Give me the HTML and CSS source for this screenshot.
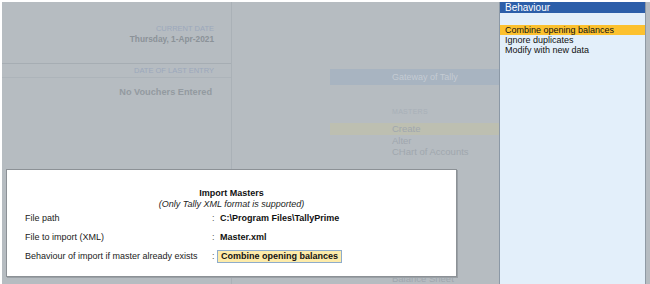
FILE: index.html
```html
<!DOCTYPE html>
<html lang="en">
<head>
  <meta charset="UTF-8" />
  <title>Import Masters</title>
  <link rel="stylesheet" href="styles.css">
</head>
<body>
  <div class="screen">
    <div class="desk">
      <div class="info">
        <div class="info-top">
          <div class="caption">CURRENT DATE</div>
          <div class="date">Thursday, 1-Apr-2021</div>
        </div>
        <div class="info-band">
          <div class="caption">DATE OF LAST ENTRY</div>
        </div>
        <div class="no-entry">No Vouchers Entered</div>
      </div>

      <div class="gateway">
        <div class="gateway-head">Gateway of Tally</div>
        <div class="gateway-body">
          <div class="group">MASTERS</div>
          <div class="item active">Create</div>
          <div class="item">Alter</div>
          <div class="item">CHart of Accounts</div>
          <div class="group spaced">TRANSACTIONS</div>
          <div class="item">Vouchers</div>
          <div class="item">Day Book</div>
          <div class="group spaced">UTILITIES</div>
          <div class="item">Banking</div>
          <div class="group spaced">REPORTS</div>
          <div class="item">Balance Sheet</div>
        </div>
      </div>

      <div class="dialog">
        <div class="dialog-title">Import Masters</div>
        <div class="dialog-note">(Only Tally XML format is supported)</div>
        <div class="fields">
          <div class="label">File path</div>
          <div class="colon">:</div>
          <div class="value">C:\Program Files\TallyPrime</div>

          <div class="label">File to import (XML)</div>
          <div class="colon">:</div>
          <div class="value">Master.xml</div>

          <div class="label">Behaviour of import if master already exists</div>
          <div class="colon">:</div>
          <div class="value"><span class="field-box">Combine opening balances</span></div>
        </div>
      </div>
    </div>

    <div class="picker">
      <div class="picker-head">Behaviour</div>
      <div class="picker-list">
        <div class="option selected">Combine opening balances</div>
        <div class="option">Ignore duplicates</div>
        <div class="option">Modify with new data</div>
      </div>
    </div>
  </div>
</body>
</html>
```

FILE: styles.css
```css
* {
  margin: 0;
  padding: 0;
  box-sizing: border-box;
  font-family: 'Liberation Sans', Arial, sans-serif;
}

html, body {
  width: 650px;
  height: 284px;
  overflow: hidden;
  background: #ffffff;
}

.screen {
  display: flex;
  width: 648px;
  height: 282px;
  margin: 2px 0 0 2px;
  padding-right: 4px;
  background: #b6bcc1;
}

.desk {
  flex: 1;
  display: flex;
  position: relative;
}

/* left info pane (dimmed) */
.info {
  width: 230px;
  border-right: 1px solid #aab1b7;
  text-align: right;
}

.info-top {
  height: 62px;
  padding: 22px 17px 0 0;
  border-bottom: 1px solid #a6adb3;
}

.caption {
  font-size: 7.5px;
  line-height: 9px;
  color: #9ca8bc;
}

.date {
  font-size: 8.3px;
  font-weight: bold;
  line-height: 12px;
  color: #8b9298;
}

.info-band {
  height: 14px;
  padding: 2px 17px 0 0;
  border-bottom: 1px solid #adb4ba;
}

.no-entry {
  padding: 7px 19px 0 0;
  font-size: 9.2px;
  font-weight: bold;
  line-height: 14px;
  color: #939aa0;
}

/* gateway panel (dimmed) */
.gateway {
  flex: 1;
  margin: 67px 0 0 98px;
  overflow: hidden;
}

.gateway-head {
  height: 16px;
  padding-left: 62px;
  background: #a8b4c1;
  color: #c4cbd3;
  font-size: 9px;
  line-height: 16px;
}

.gateway-body {
  padding-top: 23px;
}

.group {
  padding-left: 62px;
  font-size: 7px;
  line-height: 8px;
  letter-spacing: 0.3px;
  color: #a8b0b8;
  margin-bottom: 7px;
}

.group.spaced {
  margin-top: 12px;
}

.item {
  padding-left: 62px;
  font-size: 9.5px;
  line-height: 11.5px;
  color: #a0a7ae;
}

.item.active {
  background: #bdbfb1;
}

/* import dialog */
.dialog {
  position: absolute;
  left: 4px;
  top: 167px;
  width: 451px;
  height: 108px;
  background: #ffffff;
  border: 1px solid #8c9196;
  box-shadow: 1px 1px 0 #9aa0a5;
  padding-top: 17px;
}

.dialog-title {
  text-align: center;
  font-size: 9px;
  font-weight: bold;
  line-height: 12px;
  color: #111;
}

.dialog-note {
  text-align: center;
  font-size: 9px;
  font-style: italic;
  line-height: 11px;
  color: #222;
}

.fields {
  display: grid;
  grid-template-columns: 187px 8px auto;
  grid-auto-rows: 16px;
  row-gap: 3px;
  padding-left: 18px;
  font-size: 9px;
  align-items: center;
}

.label {
  color: #222;
}

.colon {
  color: #555;
}

.value {
  font-weight: bold;
  color: #111;
}

.field-box {
  display: inline-block;
  margin-left: -3px;
  padding: 0 3px;
  height: 13px;
  line-height: 11px;
  background: #fdeba9;
  border: 1px solid #8eaccb;
}

/* behaviour list */
.picker {
  width: 147px;
  background: #e3effa;
  border-left: 1px solid #8b98a6;
  border-right: 1px solid #8f9aa4;
}

.picker-head {
  height: 11px;
  padding-left: 5px;
  background: #2c5ea9;
  color: #ffffff;
  font-size: 10px;
  line-height: 11px;
}

.picker-list {
  padding-top: 12px;
}

.option {
  padding-left: 5px;
  font-size: 9px;
  line-height: 10px;
  color: #111;
}

.option.selected {
  background: #fcc12f;
}
```
